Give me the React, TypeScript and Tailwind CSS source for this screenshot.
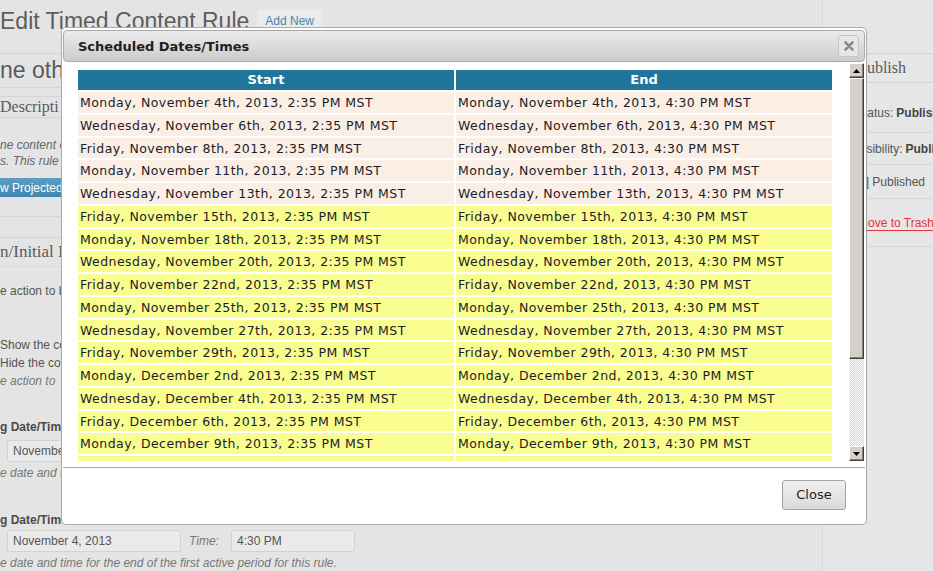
import React from 'react';

type Row = { start: string; end: string; past: boolean };

const dates: string[] = [
  'Monday, November 4th',
  'Wednesday, November 6th',
  'Friday, November 8th',
  'Monday, November 11th',
  'Wednesday, November 13th',
  'Friday, November 15th',
  'Monday, November 18th',
  'Wednesday, November 20th',
  'Friday, November 22nd',
  'Monday, November 25th',
  'Wednesday, November 27th',
  'Friday, November 29th',
  'Monday, December 2nd',
  'Wednesday, December 4th',
  'Friday, December 6th',
  'Monday, December 9th',
  'Wednesday, December 11th',
  'Friday, December 13th',
];

const rows: Row[] = dates.map((d, i) => ({
  start: `${d}, 2013, 2:35 PM MST`,
  end: `${d}, 2013, 4:30 PM MST`,
  past: i < 5,
}));

const ArrowBtn: React.FC<{ down?: boolean }> = ({ down }) => (
  <div className="flex h-[15px] w-[15px] items-center justify-center border border-t-white border-l-white border-r-[#404040] border-b-[#404040] bg-[#d4d0c8] shadow-[inset_-1px_-1px_0_#808080]">
    <svg width="7" height="4" viewBox="0 0 7 4">
      {down ? <polygon points="0,0 7,0 3.5,4" fill="#000" /> : <polygon points="0,4 7,4 3.5,0" fill="#000" />}
    </svg>
  </div>
);

const Scrollbar: React.FC = () => (
  <div className="mt-[1px] flex h-[398px] w-[15px] shrink-0 flex-col">
    <ArrowBtn />
    <div className="h-[281px] border border-t-white border-l-white border-r-[#404040] border-b-[#404040] bg-[#d4d0c8] shadow-[inset_-1px_-1px_0_#808080]" />
    <div className="flex-1 [background-image:repeating-conic-gradient(#d4d0c8_0%_25%,#ffffff_0%_50%)] [background-size:2px_2px]" />
    <ArrowBtn down />
  </div>
);

const Dialog: React.FC = () => (
  <div className="absolute left-[61px] top-[27px] w-[806px] rounded-[5px] border border-[#aaaaaa] bg-white p-[1px] pt-[2px] font-['DejaVu_Sans',sans-serif]">
    <div className="flex h-[32px] items-center justify-between rounded-[4px] border border-[#aaaaaa] bg-gradient-to-b from-[#ebebeb] to-[#cccccc] pl-[14px] pr-[5px]">
      <span className="pt-[1px] text-[13px] font-bold text-[#1e1e1e]">Scheduled Dates/Times</span>
      <div className="flex h-[22px] w-[21px] items-center justify-center rounded-[3px] border border-[#c4c4c4] bg-[#e6e6e6]">
        <svg width="10" height="10" viewBox="0 0 10 10">
          <path d="M1.5 1.5 L8.5 8.5 M8.5 1.5 L1.5 8.5" stroke="#8a8a8a" strokeWidth="2.6" strokeLinecap="round" />
        </svg>
      </div>
    </div>
    <div className="flex h-[400px] pr-[1px]">
      <div className="h-[399px] w-[799px] overflow-hidden pl-[15px] pr-[15px] pt-[8px]">
        <div className="grid w-[754px] grid-cols-2 gap-[2px] text-[12.5px] tracking-[0.45px] text-[#1c1c28]">
          <div className="flex h-[20px] items-center justify-center bg-[#21759b] text-[13px] font-bold tracking-normal text-white">Start</div>
          <div className="flex h-[20px] items-center justify-center bg-[#21759b] text-[13px] font-bold tracking-normal text-white">End</div>
          {rows.map((r, i) => (
            <React.Fragment key={i}>
              <div className={`flex h-[20.75px] items-center whitespace-nowrap pl-[2px] pt-[2px] ${r.past ? 'bg-[#fbeee5]' : 'bg-[#f9fc8f]'}`}>{r.start}</div>
              <div className={`flex h-[20.75px] items-center whitespace-nowrap pl-[2px] pt-[2px] ${r.past ? 'bg-[#fbeee5]' : 'bg-[#f9fc8f]'}`}>{r.end}</div>
            </React.Fragment>
          ))}
        </div>
      </div>
      <Scrollbar />
    </div>
    <div className="mt-[5px] flex justify-end border-t border-[#aaaaaa] pb-[13px] pr-[19px] pt-[12px]">
      <button className="h-[30px] w-[64px] rounded-[3px] border border-[#a3a3a3] bg-gradient-to-b from-[#f0f0f0] to-[#dadada] text-[13px] text-[#1e1e1e]">
        Close
      </button>
    </div>
  </div>
);

const Input: React.FC<{ value: string; w: string }> = ({ value, w }) => (
  <div className={`flex h-[22px] items-center rounded-[3px] border border-[#d2d2d2] bg-[#eaeaea] pl-[5px] text-[12px] text-[#555555] ${w}`}>{value}</div>
);

const MainColumn: React.FC = () => (
  <div className="w-[800px] shrink-0 text-[12px] text-[#555555]">
    <div className="flex h-[40px] items-center pt-[2px]">
      <h1 className="text-[23px] leading-none text-[#5c5c5c]">Edit Timed Content Rule</h1>
      <span className="ml-[8px] rounded-[3px] bg-[#ebebeb] px-[8px] py-[3px] text-[12px] text-[#4a85ad]">Add New</span>
    </div>
    <div className="mt-[13px] flex h-[35px] items-center border-y border-[#d4d4d4] text-[23px] text-[#5a5a5a]">ne othe</div>
    <div className="mt-[8px] border-t border-[#d4d4d4]">
      <div className="flex h-[21px] items-center border-b border-[#d4d4d4] font-['Liberation_Serif',serif] text-[16px] text-[#5a5a5a]">Descripti</div>
      <div className="pt-[19px] italic leading-[16px] text-[#666666]">
        <div>ne content c</div>
        <div>s. This rule</div>
      </div>
      <div className="mt-[9px] flex h-[19px] w-[80px] items-center rounded-r-[3px] bg-gradient-to-b from-[#5e9dc2] to-[#3f87b0] text-[12px] text-white">w Projected</div>
      <div className="mt-[19px] border-b border-[#d4d4d4]" />
    </div>
    <div className="mt-[20px] border-t border-[#d4d4d4]">
      <div className="flex h-[29px] items-center border-b border-[#dadada] font-['Liberation_Serif',serif] text-[17px] text-[#5a5a5a]">n/Initial I</div>
      <div className="pt-[15px]">e action to b</div>
      <div className="mt-[36px] leading-[18px]">
        <div>Show the co</div>
        <div>Hide the co</div>
        <div className="italic text-[#777777]">e action to</div>
      </div>
      <div className="mt-[28px] font-bold text-[#4a4a4a]">g Date/Tim</div>
      <div className="mt-[4px] pl-[7px]">
        <Input value="November 4, 2013" w="w-[174px]" />
      </div>
      <div className="mt-[2px] italic text-[#777777]">e date and time for the start of the first active period for this rule.</div>
      <div className="mt-[29px] font-bold text-[#4a4a4a]">g Date/Time</div>
      <div className="mt-[1px] flex items-center pl-[7px]">
        <Input value="November 4, 2013" w="w-[174px]" />
        <span className="ml-[8px] w-[42px] italic text-[#777777]">Time:</span>
        <Input value="4:30 PM" w="w-[124px]" />
      </div>
      <div className="mt-[2px] italic text-[#777777]">e date and time for the end of the first active period for this rule.</div>
    </div>
  </div>
);

const Sidebar: React.FC = () => (
  <div className="ml-[22px] flex-1 border-l border-[#d6d6d6] bg-[#e6e6e6] text-[12px] text-[#555555]">
    <div className="mt-[53px] flex h-[30px] items-center border-y border-[#d4d4d4] pl-[35px] font-['Liberation_Serif',serif] text-[16px] text-[#5a5a5a]">
      Publish
    </div>
    <div className="flex h-[50px] items-center border-b border-[#d6d6d6] pl-[33px] pt-[11px]">
      Status: <span className="ml-[3px] font-bold text-[#444444]">Published</span>
    </div>
    <div className="flex h-[32px] items-center border-b border-[#d6d6d6] pl-[33px]">
      Visibility: <span className="ml-[3px] font-bold text-[#444444]">Public</span>
    </div>
    <div className="flex h-[34px] items-center border-b border-[#d6d6d6] pl-[36px]">[ ] Published</div>
    <div className="flex h-[48px] items-center border-b border-[#d6d6d6] pl-[35px]">
      <span className="text-[#e0353d] underline decoration-[#e0353d] underline-offset-[3px]">Move to Trash</span>
    </div>
  </div>
);

export default function App() {
  return (
    <div className="relative h-[571px] w-full overflow-hidden bg-[#e4e4e4] font-['Liberation_Sans',Arial,sans-serif]">
      <div className="flex h-full">
        <MainColumn />
        <Sidebar />
      </div>
      <Dialog />
    </div>
  );
}
